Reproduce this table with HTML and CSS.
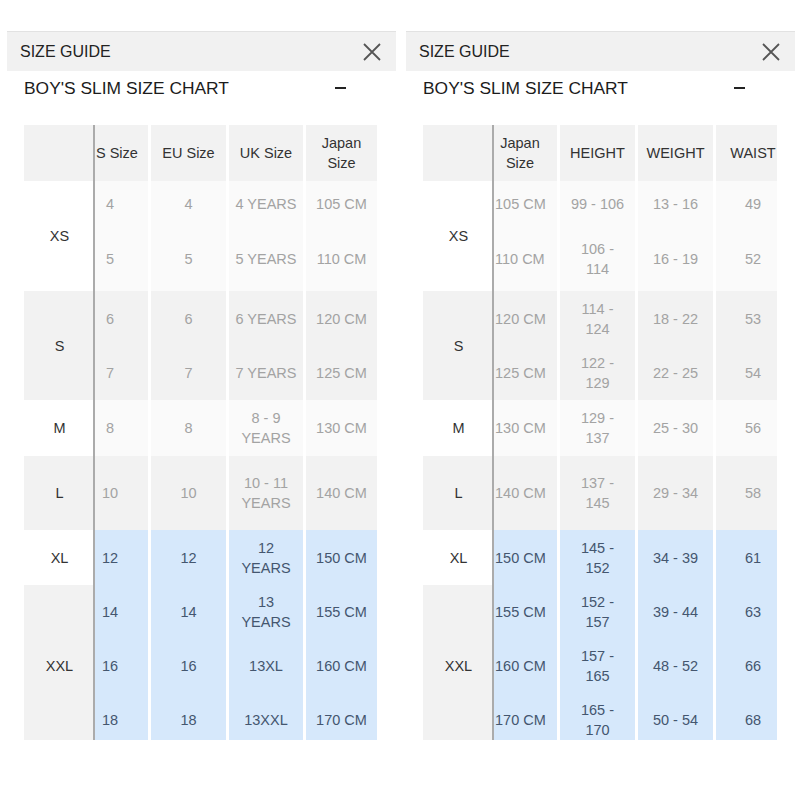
FILE: index.html
```html
<!DOCTYPE html>
<html>
<head>
<meta charset="utf-8">
<link rel="stylesheet" href="styles.css">
</head>
<body>
<div class="page">
  <section class="panel">
    <div class="bar">
      <span class="bar-title">SIZE GUIDE</span>
      <svg class="close" width="20" height="20" viewBox="0 0 20 20"><path d="M2 2 L18 18 M18 2 L2 18" stroke="#555" stroke-width="1.8" fill="none"/></svg>
    </div>
    <div class="chart-head">
      <span>BOY'S SLIM SIZE CHART</span>
      <span class="minus"></span>
    </div>
    <div class="table-wrap">
      <div class="grid grid-left">
        <div class="cell lbl gray"></div>
        <div class="cell c1 hd gray start">S Size</div>
        <div class="cell cn hd gray">EU Size</div>
        <div class="cell cn hd gray">UK Size</div>
        <div class="cell cn hd gray">Japan<br>Size</div>

        <div class="cell lbl white span2">XS</div>
        <div class="cell c1 lt">4</div><div class="cell cn lt">4</div><div class="cell cn lt">4 YEARS</div><div class="cell cn lt">105 CM</div>
        <div class="cell c1 lt">5</div><div class="cell cn lt">5</div><div class="cell cn lt">5 YEARS</div><div class="cell cn lt">110 CM</div>

        <div class="cell lbl gray span2">S</div>
        <div class="cell c1 gr">6</div><div class="cell cn gr">6</div><div class="cell cn gr">6 YEARS</div><div class="cell cn gr">120 CM</div>
        <div class="cell c1 gr">7</div><div class="cell cn gr">7</div><div class="cell cn gr">7 YEARS</div><div class="cell cn gr">125 CM</div>

        <div class="cell lbl white">M</div>
        <div class="cell c1 lt">8</div><div class="cell cn lt">8</div><div class="cell cn lt">8 - 9<br>YEARS</div><div class="cell cn lt">130 CM</div>

        <div class="cell lbl gray">L</div>
        <div class="cell c1 gr">10</div><div class="cell cn gr">10</div><div class="cell cn gr">10 - 11<br>YEARS</div><div class="cell cn gr">140 CM</div>

        <div class="cell lbl white">XL</div>
        <div class="cell c1 bl">12</div><div class="cell cn bl">12</div><div class="cell cn bl">12<br>YEARS</div><div class="cell cn bl">150 CM</div>

        <div class="cell lbl gray span3">XXL</div>
        <div class="cell c1 bl">14</div><div class="cell cn bl">14</div><div class="cell cn bl">13<br>YEARS</div><div class="cell cn bl">155 CM</div>
        <div class="cell c1 bl">16</div><div class="cell cn bl">16</div><div class="cell cn bl">13XL</div><div class="cell cn bl">160 CM</div>
        <div class="cell c1 bl">18</div><div class="cell cn bl">18</div><div class="cell cn bl">13XXL</div><div class="cell cn bl">170 CM</div>
      </div>
    </div>
  </section>

  <section class="panel">
    <div class="bar">
      <span class="bar-title">SIZE GUIDE</span>
      <svg class="close" width="20" height="20" viewBox="0 0 20 20"><path d="M2 2 L18 18 M18 2 L2 18" stroke="#555" stroke-width="1.8" fill="none"/></svg>
    </div>
    <div class="chart-head">
      <span>BOY'S SLIM SIZE CHART</span>
      <span class="minus"></span>
    </div>
    <div class="table-wrap">
      <div class="grid grid-right">
        <div class="cell lbl gray"></div>
        <div class="cell c1 hd gray">Japan<br>Size</div>
        <div class="cell cn hd gray">HEIGHT</div>
        <div class="cell cn hd gray">WEIGHT</div>
        <div class="cell cn c4 hd gray">WAIST</div>

        <div class="cell lbl white span2">XS</div>
        <div class="cell c1 lt">105 CM</div><div class="cell cn lt">99 - 106</div><div class="cell cn lt">13 - 16</div><div class="cell cn c4 lt">49</div>
        <div class="cell c1 lt">110 CM</div><div class="cell cn lt">106 -<br>114</div><div class="cell cn lt">16 - 19</div><div class="cell cn c4 lt">52</div>

        <div class="cell lbl gray span2">S</div>
        <div class="cell c1 gr">120 CM</div><div class="cell cn gr">114 -<br>124</div><div class="cell cn gr">18 - 22</div><div class="cell cn c4 gr">53</div>
        <div class="cell c1 gr">125 CM</div><div class="cell cn gr">122 -<br>129</div><div class="cell cn gr">22 - 25</div><div class="cell cn c4 gr">54</div>

        <div class="cell lbl white">M</div>
        <div class="cell c1 lt">130 CM</div><div class="cell cn lt">129 -<br>137</div><div class="cell cn lt">25 - 30</div><div class="cell cn c4 lt">56</div>

        <div class="cell lbl gray">L</div>
        <div class="cell c1 gr">140 CM</div><div class="cell cn gr">137 -<br>145</div><div class="cell cn gr">29 - 34</div><div class="cell cn c4 gr">58</div>

        <div class="cell lbl white">XL</div>
        <div class="cell c1 bl">150 CM</div><div class="cell cn bl">145 -<br>152</div><div class="cell cn bl">34 - 39</div><div class="cell cn c4 bl">61</div>

        <div class="cell lbl gray span3">XXL</div>
        <div class="cell c1 bl">155 CM</div><div class="cell cn bl">152 -<br>157</div><div class="cell cn bl">39 - 44</div><div class="cell cn c4 bl">63</div>
        <div class="cell c1 bl">160 CM</div><div class="cell cn bl">157 -<br>165</div><div class="cell cn bl">48 - 52</div><div class="cell cn c4 bl">66</div>
        <div class="cell c1 bl">170 CM</div><div class="cell cn bl">165 -<br>170</div><div class="cell cn bl">50 - 54</div><div class="cell cn c4 bl">68</div>
      </div>
    </div>
  </section>
</div>
</body>
</html>
```

FILE: styles.css
```css
html, body {
  margin: 0;
  padding: 0;
  background: #fff;
}
body {
  font-family: "Liberation Sans", Arial, sans-serif;
  color: #333;
}
.page {
  display: flex;
  gap: 10px;
  padding: 31px 0 0 7px;
}
.panel {
  width: 389px;
  flex: none;
}
.bar {
  height: 39px;
  border-top: 1px solid #e2e2e2;
  background: #f1f1f1;
  display: flex;
  align-items: center;
  justify-content: space-between;
  padding: 0 14px 0 13px;
}
.bar-title {
  font-size: 16px;
  color: #222;
}
.close {
  display: block;
}
.chart-head {
  height: 35px;
  display: flex;
  align-items: center;
  justify-content: space-between;
  padding: 0 50px 0 17px;
  font-size: 17.4px;
  color: #1c1c1c;
}
.minus {
  width: 11px;
  height: 2px;
  background: #222;
  margin-top: -2px;
}
.table-wrap {
  margin: 19px 0 0 17px;
  height: 615px;
  overflow: hidden;
}
.grid {
  display: grid;
  grid-template-rows: 56px 46px 64px 55px 54px 56px 74px 55px 54px 54px 54px;
}
.grid-left {
  grid-template-columns: 69px 55px 78px 77px 74px;
}
.grid-right {
  grid-template-columns: 69px 65px 78px 78px 64px;
}
.cell {
  display: flex;
  align-items: center;
  justify-content: center;
  text-align: center;
  font-size: 14.5px;
  line-height: 20px;
  box-sizing: border-box;
}
.lbl {
  color: #333;
  padding-left: 2px;
}
.span2 { grid-row: span 2; }
.span3 { grid-row: span 3; }
.c1 {
  border-left: 2px solid #ababab;
}
.cn {
  border-left: 3px solid #fff;
}
.hd {
  color: #333;
}
.gray { background: #f2f2f2; }
.white { background: #fff; }
.lt { background: #fafafa; color: #a3a3a3; }
.gr { background: #f2f2f2; color: #a3a3a3; }
.bl { background: #d6e8fb; color: #44566f; }

.grid-left .c1 {
  padding-right: 23px;
}
.grid-left .c1.start {
  justify-content: flex-start;
  padding: 0 0 0 1px;
}
.grid-right .c1 {
  justify-content: flex-start;
  padding-left: 1px;
}
.grid-right .c1.hd {
  justify-content: center;
  padding: 0 11px 0 0;
}
.grid-right .c4 {
  padding-left: 13px;
}
```
